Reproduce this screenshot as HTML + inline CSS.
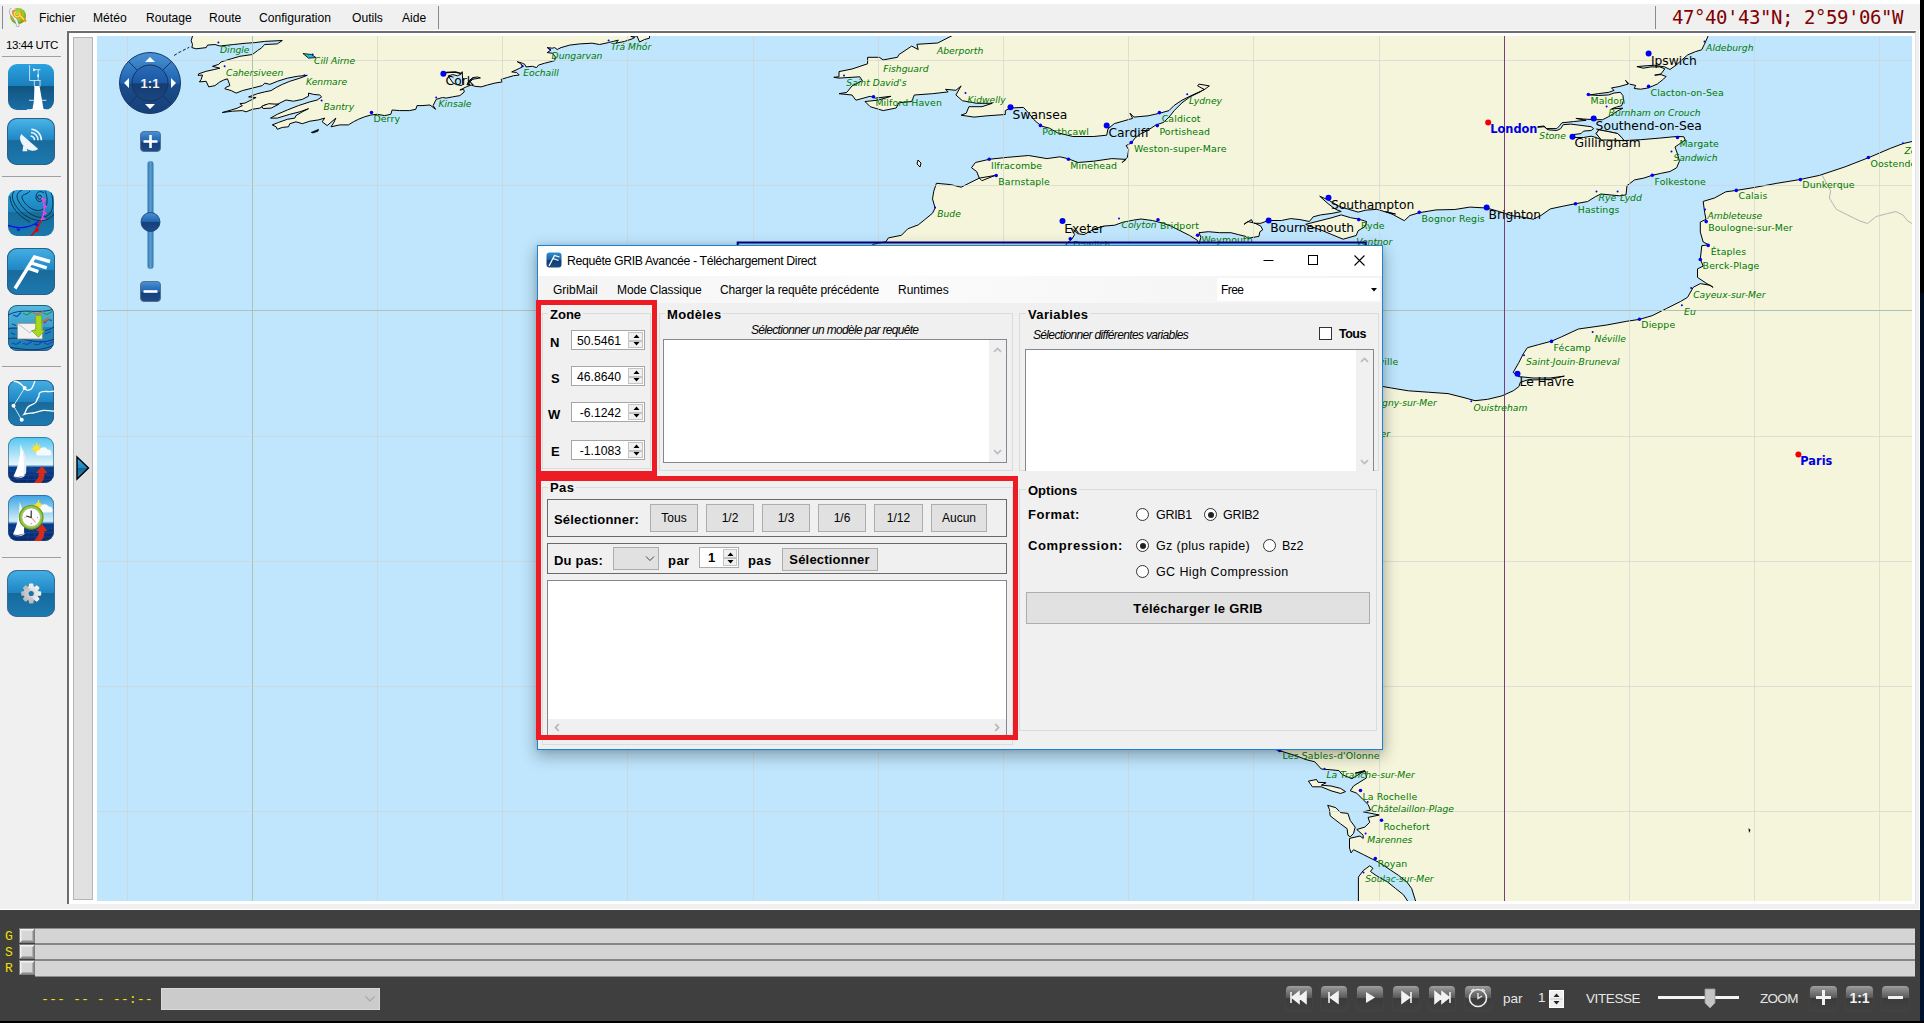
<!DOCTYPE html>
<html lang="fr"><head><meta charset="utf-8"><title>qtVlm - Requête GRIB Avancée</title>
<style>
*{box-sizing:border-box;margin:0;padding:0}
html,body{width:1924px;height:1023px;overflow:hidden;background:#fff}
body{position:relative;font-family:"Liberation Sans",sans-serif;font-size:12px;color:#000}
.abs{position:absolute}
#topbar{position:absolute;left:0;top:4px;width:1920px;height:26px;background:#f0f0f0}
#topbar .mi{position:absolute;top:7px;font-size:12.1px;line-height:14px;white-space:nowrap}
#coords{position:absolute;left:1672px;top:6px;font-family:"DejaVu Sans Mono","Liberation Mono",monospace;font-size:19px;letter-spacing:-0.44px;line-height:22px;color:#800000;white-space:pre}
#leftbar{position:absolute;left:0;top:30px;width:67px;height:879px;background:#f0f0f0}
.tb{position:absolute;left:8px;width:46px;height:46px;border-radius:9px;background:linear-gradient(#2b9fd9 0%,#1c7fba 49%,#15689a 50%,#1b78ad 100%);box-shadow:0 0 0 1px #14598a inset;overflow:hidden}
.sep{position:absolute;left:2px;width:59px;height:1px;background:#a0a0a0}
#bottom{position:absolute;left:0;top:909px;width:1920px;height:112px;background:#3f3f3f}
#black-r{position:absolute;left:1920px;top:0;width:4px;height:1023px;background:linear-gradient(#000 0,#000 293px,#000c20 293px,#00122e 1021px,#000 1021px)}
#black-b{position:absolute;left:0;top:1021px;width:1924px;height:2px;background:#000}
</style></head>
<body>
<div id="topbar">
  <div class="abs" style="left:2px;top:2px;width:1px;height:23px;background:#8a8a8a"></div>
  <svg class="abs" style="left:8px;top:4px" width="20" height="20" viewBox="8 8 20 20"><defs><radialGradient id="gl" cx="0.45" cy="0.4" r="0.6"><stop offset="0" stop-color="#b4e848"/><stop offset="0.7" stop-color="#8cc820"/><stop offset="1" stop-color="#5e9c10"/></radialGradient></defs><circle cx="18" cy="16" r="8" fill="url(#gl)"/><path d="M14.800 9.300C11 8 9.500 11.500 12 14.500S16.500 19 17.800 25.400" stroke="#9a9aae" stroke-width="3.200" fill="none" stroke-linecap="round"/><path d="M14.800 9.300C11 8 9.500 11.500 12 14.500S16.500 19 17.800 25.400" stroke="#f2f2f8" stroke-width="2" fill="none" stroke-linecap="round"/><path d="M15.800 10.300a3.400 3.400 0 1 0 4.300 1.300" stroke="#f0901a" stroke-width="3" fill="none"/><path d="M19.500 15.500l5.500 5" stroke="#f0901a" stroke-width="2.800" stroke-linecap="round"/><path d="M16 11.500a2.800 2.800 0 1 0 3.500 1M19.500 15.300l4.500 4.200" stroke="#ffe468" stroke-width="1.200" fill="none"/></svg>
  <span class="mi" style="left:39px">Fichier</span>
  <span class="mi" style="left:93px">Météo</span>
  <span class="mi" style="left:146px">Routage</span>
  <span class="mi" style="left:209px">Route</span>
  <span class="mi" style="left:259px">Configuration</span>
  <span class="mi" style="left:352px">Outils</span>
  <span class="mi" style="left:402px">Aide</span>
  <div class="abs" style="left:438px;top:2px;width:1px;height:23px;background:#8a8a8a"></div>
  <div class="abs" style="left:1655px;top:2px;width:1px;height:23px;background:#8a8a8a"></div>
</div>
<div id="coords">47°40'43"N; 2°59'06"W</div>

<div id="leftbar">
  <div class="abs" style="left:6px;top:8px;width:60px;font-size:11.6px;line-height:14px;white-space:nowrap;letter-spacing:-0.45px">13:44 UTC</div>
  <div class="sep" style="top:26px"></div>
  <!-- 1: station -->
  <div class="tb" style="top:34px;box-shadow:none;background:linear-gradient(#2ba2e0 0%,#1b7fbe 47%,#115480 48%,#1a6ea6 100%)"><svg width="46" height="46" viewBox="0 0 46 46"><path d="M21.600 1v15.500h11M30.200 5.700v10.500M25.300 5.700h7.200M26.400 16.500v6.200M32 16.500v6.200" stroke="#e8f4fb" stroke-width="0.800" fill="none"/><path d="M25.300 4l2.700 1.700-2.700 1.700z" fill="#fff"/><path d="M30.200 10.500v2.500" stroke="#fff" stroke-width="1.600"/><path d="M26.400 22h5.100l2.500 14.300 1.500 8.700 3 1h-17l3-1 1.500-8.700z" fill="#fff"/><path d="M21 36.300h17.400M19 45.600h21.600" stroke="#fff" stroke-width="0.800"/></svg></div>
  <!-- 2: dish -->
  <div class="tb" style="top:88px;left:7px;width:48px;height:47px;border-radius:10px;background:linear-gradient(#4db6e8 0%,#1e86c4 47%,#1a6a9a 48%,#1c7ab2 100%);box-shadow:0 0 0 1px #2a5f88 inset"><svg width="48" height="47" viewBox="0 0 48 47"><path d="M14.200 16.100L31.200 30.900A11.300 8.200 41 0 1 14.200 16.100z" fill="#eef5fa"/><path d="M16.300 27.500l3.300 2.300 0.900 3.400h-5z" fill="#eef5fa"/><path d="M23.600 18a4 4 0 0 1 3.900 4.200M24 14.500a7.400 7.400 0 0 1 7 7.800M24.300 11.200a10.800 10.800 0 0 1 10.100 11" stroke="#eef5fa" stroke-width="1.600" fill="none"/></svg></div>
  <div class="sep" style="top:146px"></div>
  <!-- 3: weather chart -->
  <div class="tb" style="top:160px;box-shadow:none;background:linear-gradient(#2ba0dc 0%,#1c82bc 47%,#166e9c 48%,#1a78ac 100%)"><svg width="46" height="46" viewBox="0 0 46 46"><g fill="none" stroke="#0a3348" stroke-width="1"><circle cx="31.500" cy="7.200" r="2"/><path d="M36 3c-4-3-8-1-8 4s5 6 7 2"/><path d="M22 1c-3 4-9 3-8 7 4 10 18 18 24 8 2-4 1-11-1-15"/><path d="M14 0c-6 3-6 7-3 12 7 12 24 22 32 10 3-6 2-14 0-20"/><path d="M6 1c-4 6 0 13 5 19 9 10 26 16 35 4"/><path d="M2 6c0 10 8 20 20 26"/></g><path d="M0 35.500c9 3.500 22 3 30.500-4" stroke="#0a14e8" stroke-width="1.400" fill="none"/><path d="M8 38.500l2.500 3 2-2.800zM26 34.500l3.500 2.500 0.500-3.500z" fill="#0a14e8"/><path d="M33.500 7.500c4 6 3.500 16-0.500 23" stroke="#f040f0" stroke-width="1.500" fill="none"/><path d="M35 8l3.500 1.500-2.500 2.500zM36.500 14.500l3 2-3 2zM36.500 21l3 2.500-3.500 1.500zM35 27l3 2.500-4 0.500z" fill="#f040f0"/><path d="M23 46c4-4 7.500-9 10-15.500" stroke="#e80000" stroke-width="1.500" fill="none"/><circle cx="28.800" cy="40" r="2" fill="#e80000"/></svg></div>
  <!-- 4: wind barb -->
  <div class="tb" style="top:218px;left:7px;width:48px;height:47px;border-radius:10px;background:linear-gradient(#45b0e4 0%,#1e86c4 47%,#1a6a9a 48%,#1c7ab2 100%);box-shadow:0 0 0 1px #2a5f88 inset"><svg width="48" height="47" viewBox="0 0 48 47"><path d="M8 40.500L27.500 9l15.500 4.500M24.200 15l15.500 4.800M21.200 20.200l10.200 3.500" stroke="#fff" stroke-width="3.400" fill="none"/></svg></div>
  <!-- 5: mail grib -->
  <div class="tb" style="top:275px;background:linear-gradient(#56bcdc 0%,#3aa0c4 47%,#2288b4 48%,#1f7eac 100%);box-shadow:0 0 0 1px #2a5f88 inset"><svg width="46" height="46" viewBox="0 0 46 46"><g fill="none" stroke="#0c2c78" stroke-width="0.900"><path d="M0 10c14-8 30 0 46-6M0 24c14-4 30 8 46-2M0 34c12-4 30 8 46 0M0 42c14 2 30 6 46-2"/></g><g fill="none" stroke-width="1.100"><path d="M5 10l4 1.500 4-4" stroke="#1040e0"/><path d="M15 8.500l4 1.500 5-3.500" stroke="#2a9030"/><path d="M25 7.500l4 2 6-3" stroke="#e06020"/><path d="M35 8l4 1.500 5-3" stroke="#2a9030"/><path d="M4 19l4 1.500M36 18l4-3.500 4 1" stroke="#1040e0"/><path d="M35 17l6-3.500" stroke="#e06020" stroke-width="2"/><path d="M3 28l4 1.500M37 29l6-2.500" stroke="#1040e0"/><path d="M4 38l4 1.500 5-3M15 38.500l4 1 5-3M26 39l4 1 5-4M36 38l4 1.500 5-3" stroke="#1040e0"/></g><rect x="9.400" y="18.300" width="25" height="15.700" fill="#f2f2f2" stroke="#8e8e8e" stroke-width="0.800"/><path d="M9.400 18.300l12.500 9.500 12.500-9.500" fill="none" stroke="#b0b0b0" stroke-width="0.800"/><path d="M27.700 10.500h6v15h3l-6.300 6.800-6.800-6.800h4.100z" fill="#a8d820" stroke="#78a810" stroke-width="0.800"/></svg></div>
  <div class="sep" style="top:336px"></div>
  <!-- 6: route -->
  <div class="tb" style="top:350px;box-shadow:0 0 0 1px #2a5f88 inset;background:linear-gradient(#45b0e4 0%,#1e86c4 47%,#1a6a9a 48%,#1c7ab2 100%)"><svg width="46" height="46" viewBox="0 0 46 46"><path d="M16.600 8.100L5.500 25.800l8.200 14" stroke="#fff" stroke-width="0.800" fill="none"/><circle cx="16.600" cy="8.100" r="2" fill="#fff"/><circle cx="5.500" cy="25.800" r="2" fill="#fff"/><circle cx="13.700" cy="39.800" r="2" fill="#fff"/><path d="M5.500 1c4 0 8 3 11 7s4 2 6 1.400 3-5 4.500-8.400M46.700 11c-5 1.500-10-0.500-13.700 1s-1 3.500-2.600 5.300-1.500 3.500-2.700 5.200-6 2.500-7.800 4.500-2 5-3.900 7.300c3-1 6-1 9-1.300s7-2.500 10.600-2.600 7 1 11.100 0.600" stroke="#fff" stroke-width="1.300" fill="none"/></svg></div>
  <!-- 7: sail -->
  <div class="tb" style="top:407px;box-shadow:0 0 0 1px rgba(40,80,120,.6) inset;background:linear-gradient(#52c6f0 0%,#e4f5fb 60%,#6fa8d8 63%,#0c3f8e 66%,#08286a 100%)"><svg width="46" height="46" viewBox="0 0 46 46"><g stroke="#2a58a8" stroke-width="0.500" opacity="0.700"><path d="M0 34h46M0 38h46M0 42.500h46M23 30l-14 16M23 30l-4 16M23 30l6 16M23 30l16 16M23 30l26 12"/></g><path d="M12.400 7c0.500 11-2 23-7 32.500 4 0.800 8 0.500 11-1 0.500-11 0-22-4-31.500z" fill="#fff"/><path d="M14.500 11c3.500 8 4.500 17 3.500 25.500l-2.500 1.500c0.500-9 0.500-18-1-27z" fill="#e6edf4"/><path d="M5 40c4 1.500 9 0.500 13-2.500-3 4-9 5-13 2.500z" fill="#dfe8f0"/><g stroke="#ffe22a" stroke-width="1.200"><path d="M28.600 6v11M23.500 11.400h10M25 7.800l7 7M32 7.800l-7 7"/></g><circle cx="28.600" cy="11.400" r="3" fill="#ffe22a"/><path d="M29 18.500a3.300 3.300 0 0 1 2.500-5.500 4.500 4.500 0 0 1 8-0.500 3.500 3.500 0 0 1 3 6z" fill="#f6fafc"/><path d="M25.500 46c3-3 5.500-5 5.500-10h-3l6-7 5.500 7h-3c0 5-1.500 8-3.500 10z" fill="#d42c1c"/></svg></div>
  <!-- 8: sail clock -->
  <div class="tb" style="top:465px;box-shadow:0 0 0 1px rgba(40,80,120,.6) inset;background:linear-gradient(#3aa4e4 0%,#d4eef8 57%,#6fa8d8 60%,#0c3f8e 63%,#08286a 100%)"><svg width="46" height="46" viewBox="0 0 46 46"><g stroke="#2a58a8" stroke-width="0.500" opacity="0.700"><path d="M0 33h46M0 37.500h46M0 42h46M23 29l-14 17M23 29l-4 17M23 29l6 17M23 29l16 17"/></g><path d="M11.500 7c0.500 11-2 23-6.500 32.500 4 0.800 8 0.500 11-1 0.500-11 0-22-4.500-31.500z" fill="#fff"/><path d="M5 40c4 1.500 9 0.500 13-2.500-3 4-9 5-13 2.500z" fill="#dfe8f0"/><g stroke="#ffe22a" stroke-width="1.200"><path d="M30.500 5v9M26 10h9"/></g><circle cx="30.500" cy="10.500" r="3" fill="#ffe22a"/><path d="M30 17.500a3.300 3.300 0 0 1 2.500-5.500 4.500 4.500 0 0 1 8-0.500 3.500 3.500 0 0 1 3 6z" fill="#f6fafc"/><path d="M25.500 46c3-3 5.500-5 5.500-10h-3l6-7 5.500 7h-3c0 5-1.500 8-3.500 10z" fill="#d42c1c"/><circle cx="23.200" cy="22.300" r="11.800" fill="#94c83c" stroke="#6a9a20" stroke-width="1.200"/><circle cx="23.200" cy="22.300" r="9.300" fill="#fdfdfd" stroke="#a8b890" stroke-width="0.800"/><path d="M23.200 15.500v7l-5-1.500" stroke="#222" stroke-width="1.100" fill="none"/><path d="M23.200 22.500l4.500 5" stroke="#e04040" stroke-width="0.700"/><g fill="#888"><circle cx="29.500" cy="22.300" r="0.600"/><circle cx="23.200" cy="28.700" r="0.600"/><circle cx="17" cy="22.300" r="0.600"/></g></svg></div>
  <div class="sep" style="top:527px"></div>
  <!-- 9: gear -->
  <div class="tb" style="top:540px;left:7px;width:48px;height:47px;border-radius:10px;background:linear-gradient(#45b0e4 0%,#1e86c4 48%,#166a9c 49%,#1c7ab2 100%);box-shadow:0 0 0 1px #3a6a90 inset"><svg width="48" height="47" viewBox="0 0 48 47"><defs><linearGradient id="gg" x1="0" y1="0" x2="0" y2="1"><stop offset="0" stop-color="#f4f4f4"/><stop offset="1" stop-color="#b8b8b8"/></linearGradient></defs><g transform="translate(24.200,23.500)" fill="url(#gg)"><circle r="7.600"/><rect x="-2.300" y="-10" width="4.600" height="20" rx="1.200"/><rect x="-2.300" y="-10" width="4.600" height="20" rx="1.200" transform="rotate(45)"/><rect x="-2.300" y="-10" width="4.600" height="20" rx="1.200" transform="rotate(90)"/><rect x="-2.300" y="-10" width="4.600" height="20" rx="1.200" transform="rotate(135)"/><circle r="2.600" fill="#1a74ae"/></g></svg></div>
</div>

<!-- map frame -->
<div class="abs" style="left:67px;top:31px;width:1849px;height:874px;background:#fff;border-left:2px solid #6d6d6d;border-top:2px solid #6d6d6d;border-right:1px solid #e3e3e3;border-bottom:1px solid #e3e3e3"></div>
<div class="abs" style="left:1916px;top:30px;width:3px;height:879px;background:#f0f0f0"></div>
<div class="abs" style="left:0;top:904px;width:1919px;height:5px;background:#f0f0f0"></div>
<div class="abs" style="left:73px;top:37px;width:20px;height:863px;background:#e1e1e1;border:1px solid #b5b5b5"></div>
<svg class="abs" style="left:74px;top:453px" width="18" height="30" viewBox="0 0 18 30"><defs><linearGradient id="ag" x1="0" y1="0" x2="0" y2="1"><stop offset="0" stop-color="#35a8e0"/><stop offset="0.5" stop-color="#1f86c0"/><stop offset="0.52" stop-color="#15689a"/><stop offset="1" stop-color="#2090c8"/></linearGradient></defs><path d="M3 4L14.500 15 3 26z" fill="url(#ag)" stroke="#000" stroke-width="1.4" stroke-linejoin="miter"/></svg>
<svg id="map" width="1815" height="865" viewBox="97 36 1815 865" style="position:absolute;left:97px;top:36px">
<rect x="97" y="36" width="1815" height="865" fill="#bfe6fd"/>
<polygon fill="#f5f5dc" stroke="#000" stroke-width="1" stroke-linejoin="round" points="192.5,30 192.5,36.0 191.2,40.7 192.5,44.5 191.9,47.6 196.2,48.8 206.2,47.6 207.5,45.1 214.9,44.5 219.9,46.0 233.7,44.5 246.1,43.2 254.9,42.6 264.8,41.4 282.3,40.5 277.3,43.9 264.8,44.5 261.1,48.2 257.4,50.7 254.9,52.6 252.4,54.5 239.9,56.3 231.2,58.8 221.2,61.9 218.7,64.4 212.5,66.3 219.9,68.2 214.9,69.4 206.2,71.3 198.7,73.8 198.1,75.4 202.5,75.0 201.2,79.4 199.4,81.9 206.2,81.3 208.7,86.9 214.9,85.6 219.9,81.9 223.7,80.0 227.4,78.8 228.7,81.9 229.9,85.6 225.6,87.5 224.9,88.8 231.2,90.6 236.2,93.1 242.4,90.6 252.4,88.1 262.3,85.6 264.8,83.1 269.8,84.4 277.3,81.3 287.3,78.2 297.3,76.3 307.3,75.3 299.8,78.2 289.8,81.3 282.3,84.4 276.1,87.5 271.1,90.6 264.8,91.9 257.4,93.7 252.4,95.6 248.6,96.9 256.1,97.5 249.9,100.6 244.9,103.1 239.9,103.7 242.4,105.6 237.4,108.1 231.2,110.0 222.4,112.5 232.4,111.2 242.4,110.6 246.1,111.8 252.4,109.3 259.9,108.1 264.8,105.0 277.3,104.3 286.0,100.0 293.5,101.2 302.3,99.4 308.5,96.2 308.5,93.1 313.5,94.4 319.7,95.0 321.6,96.9 317.2,100.0 309.8,101.9 298.5,105.6 287.3,110.0 277.3,114.3 270.5,118.1 277.3,118.1 289.8,114.3 299.8,111.8 308.5,108.7 302.3,111.8 296.0,115.6 294.8,118.1 287.3,119.3 278.6,122.4 272.3,124.9 276.1,126.8 277.3,129.3 282.3,127.4 288.5,126.8 289.8,123.7 296.0,121.8 302.3,123.7 309.8,121.2 318.5,119.9 324.7,118.1 322.2,121.8 327.2,125.6 335.9,118.1 333.5,123.1 331.0,126.8 339.7,124.9 348.4,124.9 353.4,121.8 358.4,119.3 364.6,116.8 370.9,115.0 377.1,114.3 384.6,115.6 390.8,114.3 392.1,110.0 399.6,110.6 409.5,110.6 415.8,109.3 417.0,105.6 422.0,105.6 430.0,105.0 435.6,109.3 433.1,105.6 436.2,99.4 442.5,97.5 446.2,98.1 452.4,96.9 459.9,95.6 464.3,91.9 463.7,89.4 459.9,90.0 466.2,86.9 471.1,85.0 474.9,86.3 481.1,86.9 487.4,85.0 494.8,83.1 502.3,81.9 501.1,79.4 507.3,77.5 513.6,75.7 519.2,75.0 516.7,72.5 511.7,71.9 516.0,70.0 519.8,68.2 523.5,66.3 519.8,63.2 517.3,61.7 522.3,63.2 524.8,64.4 526.0,66.9 532.3,66.3 536.6,67.6 538.5,65.1 544.7,63.2 552.2,61.3 554.7,60.7 555.3,56.9 552.2,53.2 547.2,52.6 551.0,50.1 547.2,47.6 552.2,48.2 554.7,47.6 557.2,49.5 561.0,47.6 569.7,45.1 579.7,43.9 592.1,43.2 599.6,44.5 608.4,42.6 613.3,41.4 618.3,40.1 615.8,43.2 624.6,41.4 632.1,38.9 634.6,37.6 630.8,36.4 637.0,36.0 639.5,42.0 644.5,39.5 649.5,38.2 649.5,36.0 649.5,30"/>
<polygon fill="#f5f5dc" stroke="#000" stroke-width="1" stroke-linejoin="round" points="952.0,30 952.0,35.7 937.7,43.0 916.9,44.3 918.2,49.5 911.7,46.1 898.8,54.7 897.5,57.3 883.2,59.9 879.3,57.3 867.6,57.3 867.6,63.8 852.0,69.0 839.0,71.6 839.0,76.8 833.8,77.3 839.0,78.1 859.8,76.8 862.4,80.7 852.0,85.9 846.8,92.4 839.0,93.7 852.0,95.0 855.9,100.2 870.2,96.3 875.4,98.1 891.0,96.3 878.0,100.2 865.0,101.5 870.2,106.7 883.2,110.6 896.2,108.0 898.8,102.8 911.7,101.5 914.3,95.0 932.5,93.7 948.1,91.9 945.5,89.3 955.9,90.3 961.1,85.9 955.9,95.0 962.4,100.7 976.7,103.3 992.3,103.3 981.9,106.7 968.9,106.7 966.3,113.2 961.1,115.2 974.1,117.1 987.1,115.8 1005.3,114.5 1005.3,110.6 1010.5,108.0 1023.5,107.4 1028.7,113.2 1035.2,121.0 1041.7,126.2 1049.5,128.2 1057.3,132.7 1072.9,136.5 1093.7,136.5 1106.7,135.2 1108.0,128.8 1114.4,123.6 1132.6,118.4 1130.0,113.2 1133.9,117.1 1148.2,115.8 1159.9,113.2 1169.0,110.6 1174.2,105.4 1182.0,100.2 1192.4,95.0 1204.1,89.8 1209.3,85.9 1198.9,84.1 1197.6,85.9 1204.1,89.3 1200.2,91.9 1189.8,97.0 1182.0,102.8 1174.2,110.6 1169.0,117.1 1163.8,122.3 1156.0,124.9 1148.2,130.1 1140.4,134.0 1135.2,137.8 1131.3,143.0 1126.1,145.6 1128.7,149.5 1127.4,157.3 1122.2,162.5 1126.1,159.4 1111.9,158.6 1093.7,161.2 1078.1,162.5 1067.7,158.6 1059.9,156.8 1046.9,158.6 1028.7,155.5 1007.9,157.3 989.7,159.2 975.4,162.5 971.5,167.7 976.7,171.6 979.3,178.1 981.9,180.7 994.9,175.5 979.3,178.1 968.9,183.3 961.1,187.2 950.7,184.6 936.4,183.3 933.8,191.1 932.5,198.9 935.1,208.0 932.5,213.2 924.7,219.7 918.2,224.9 907.8,228.8 901.4,235.3 888.4,237.9 885.8,241.8 872.8,244.4 860,260 900,300 1060,300 1066.2,243.9 1071.8,239.2 1074.6,234.6 1070.9,228.0 1073.7,229.9 1077.4,233.6 1084.0,234.6 1094.3,228.9 1103.6,226.1 1114.8,225.2 1122.3,222.4 1133.6,220.1 1141.0,219.0 1152.3,220.5 1163.5,223.3 1171.0,226.1 1180.3,230.8 1189.7,235.5 1197.2,240.2 1199.0,243.9 1200.9,237.4 1199.0,232.7 1208.4,231.7 1219.6,232.7 1230.9,232.7 1238.3,234.6 1245.8,236.4 1247.7,238.3 1258.9,236.4 1259.9,231.7 1262.7,229.9 1260.8,226.1 1255.2,223.3 1247.7,221.5 1244.0,224.3 1251.4,219.6 1253.3,223.3 1260.8,223.3 1268.3,220.5 1281.4,220.5 1290.7,218.6 1300.1,219.6 1309.4,221.5 1313.2,216.8 1320.7,214.9 1331.9,213.4 1341.2,211.5 1335.6,209.3 1328.1,203.7 1319.7,196.2 1328.1,199.9 1339.4,206.5 1348.7,209.3 1358.1,212.1 1365.6,210.2 1376.8,209.3 1386.2,212.1 1395.5,214.0 1385.6,211.7 1393.1,214.6 1404.3,220.7 1409.9,215.5 1419.3,212.7 1436.1,209.9 1454.8,209.5 1469.8,207.1 1486.7,208.0 1499.8,211.7 1511.0,215.5 1524.1,217.4 1533.4,219.2 1540.9,215.5 1550.3,208.9 1563.4,206.1 1574.6,203.9 1587.7,201.5 1595.2,196.8 1600.8,194.0 1610.1,194.9 1619.5,195.8 1626.0,194.9 1627.0,185.6 1634.5,179.9 1643.8,178.1 1652.2,175.3 1660.7,173.4 1670.0,171.5 1676.6,167.8 1679.4,161.2 1678.8,159.1 1677.5,154.0 1675.0,147.0 1678.8,144.4 1685.2,140.0 1683.9,136.8 1677.5,136.4 1659.8,138.1 1640.7,139.7 1624.2,140.6 1621.6,137.5 1617.8,133.6 1608.9,131.7 1598.8,129.8 1596.2,133.6 1601.3,140.0 1596.2,137.5 1591.1,136.2 1583.5,137.5 1573.4,137.5 1570.8,134.9 1581.0,133.6 1583.5,131.1 1591.1,130.5 1593.7,128.6 1591.1,126.7 1581.0,125.4 1570.8,124.1 1563.2,124.7 1560.7,128.6 1556.8,130.5 1548.0,129.8 1544.1,126.7 1537.8,127.3 1537.8,126.7 1544.1,126.0 1546.7,128.6 1556.8,128.6 1559.4,126.0 1561.9,122.8 1573.4,121.6 1586.1,120.3 1575.9,118.4 1583.5,119.0 1593.7,119.7 1602.6,119.7 1608.9,116.5 1614.0,113.3 1617.8,110.8 1622.9,108.2 1611.5,108.9 1616.6,107.0 1621.6,105.7 1623.5,100.6 1622.9,95.5 1620.4,92.3 1614.0,93.0 1608.9,94.9 1598.8,95.5 1589.9,94.9 1598.8,93.6 1608.9,92.3 1614.0,90.4 1611.5,87.9 1619.1,86.6 1628.0,84.1 1625.5,80.3 1629.3,84.1 1635.6,85.4 1634.3,88.5 1640.7,89.2 1648.3,87.9 1657.2,84.1 1663.6,79.0 1666.1,76.5 1661.0,74.6 1654.7,75.2 1661.0,73.9 1664.8,68.8 1659.8,66.9 1650.9,66.9 1643.2,68.2 1636.9,66.6 1647.1,65.7 1654.7,65.3 1664.8,66.9 1669.9,69.5 1676.3,65.0 1682.6,59.3 1687.7,54.9 1695.3,51.7 1701.7,49.8 1704.2,44.7 1706.8,39.0 1708.0,36.1 1708.0,30"/>
<polygon fill="#f5f5dc" stroke="#000" stroke-width="1" stroke-linejoin="round" points="1305.7,224.3 1316.9,221.5 1331.9,217.7 1341.2,214.9 1350.6,217.7 1358.1,219.0 1366.5,221.5 1365.6,226.1 1358.1,230.8 1356.2,235.5 1343.1,239.2 1331.9,234.6 1320.7,229.9 1309.4,226.1"/>
<polygon fill="#f5f5dc" stroke="#000" stroke-width="1" stroke-linejoin="round" points="918,160 921,163 920,167 917,164"/>
<polygon fill="#f5f5dc" stroke="#000" stroke-width="1" stroke-linejoin="round" points="1912.9,141.3 1903.0,143.6 1890.3,148.4 1869.0,157.5 1844.9,166.9 1819.4,175.4 1799.6,179.6 1776.9,183.3 1754.2,187.5 1736.6,190.4 1725.8,191.8 1714.5,198.0 1703.2,201.4 1704.6,212.2 1706.0,219.3 1700.3,222.1 1700.3,232.1 1703.2,242.0 1708.8,244.8 1701.8,245.7 1700.3,259.0 1703.2,266.1 1697.5,268.9 1697.5,277.4 1706.0,283.1 1713.1,287.3 1710.3,285.3 1700.3,283.6 1693.2,287.3 1687.6,297.3 1680.5,301.5 1666.3,308.6 1652.1,315.7 1639.4,319.4 1626.6,321.3 1606.8,325.0 1578.4,329.0 1561.4,336.9 1551.5,341.2 1538.7,344.6 1527.4,347.7 1523.2,353.9 1518.9,362.5 1513.2,372.4 1518.9,376.6 1533.1,378.0 1550.1,378.0 1564.3,376.1 1550.1,379.5 1527.4,380.0 1520.3,382.3 1518.9,386.6 1513.2,390.8 1501.9,395.9 1487.7,399.3 1475.0,400.7 1465.0,397.9 1448.0,393.6 1428.2,392.2 1408.3,390.8 1391.3,388.0 1380.0,386.0 1300,420 1200,600 1250,745 1276.1,749.7 1284.2,752.1 1297.1,756.1 1305.2,759.4 1314.8,761.8 1321.3,769.0 1331.0,769.8 1339.0,770.6 1342.3,774.7 1351.9,778.7 1364.8,770.6 1355.2,773.1 1365.6,771.5 1366.5,777.9 1360.0,781.9 1353.5,786.0 1350.3,790.8 1356.8,793.2 1363.2,799.7 1368.1,804.5 1370.5,810.2 1363.2,811.8 1379.4,815.0 1368.1,817.4 1369.7,822.3 1364.8,827.1 1356.8,829.5 1363.2,835.2 1363.2,838.4 1360.0,836.0 1349.5,838.4 1349.5,848.1 1351.1,852.9 1353.5,849.7 1363.2,854.5 1372.9,859.4 1379.4,862.6 1389.0,869.0 1398.7,875.5 1406.8,881.9 1411.6,888.4 1415.6,901.0 1415.6,910 1920,910 1920,138.3"/>
<polygon fill="#f5f5dc" stroke="#000" stroke-width="1" stroke-linejoin="round" points="1358.4,910 1358.4,901.0 1358.4,877.1 1363.2,870.6 1369.7,865.8 1372.9,868.2 1370.5,871.5 1376.1,875.5 1387.4,881.9 1395.5,888.4 1403.5,894.8 1407.6,901.0 1407.6,910"/>
<polygon fill="#f5f5dc" stroke="#000" stroke-width="1" stroke-linejoin="round" points="1598.8,129.8 1608.9,131.7 1617.8,133.6 1621.6,137.5 1624.2,140.6 1608.9,140.0 1601.3,140.0 1596.2,133.6"/>
<polygon fill="#f5f5dc" stroke="#000" stroke-width="1" stroke-linejoin="round" points="261.8,106.2 268.7,103.7 278.7,104.3 271.2,108.1 263.1,108.5"/>
<polygon fill="#000" stroke="#000" stroke-width="0.6" points="311.1,132.4 318.6,129.3 318.0,131.2 313.0,133.0"/>
<polyline fill="none" stroke="#000" stroke-width="0.9" stroke-dasharray="3 2" points="174.2,55.4 180.6,51.6 189.2,47.3"/>
<polygon fill="#f5f5dc" stroke="#000" stroke-width="1" stroke-linejoin="round" points="1308.4,781.1 1316.5,779.5 1318.1,782.3 1326.1,782.7 1321.3,785.2 1331.0,786.0 1340.6,788.4 1345.5,791.6 1340.6,793.5 1331.0,790.8 1321.3,786.8 1312.4,786.8"/>
<polygon fill="#f5f5dc" stroke="#000" stroke-width="1" stroke-linejoin="round" points="1327.7,805.3 1335.8,807.7 1340.6,812.6 1347.9,813.4 1350.3,820.6 1355.2,827.1 1353.5,833.5 1350.3,836.8 1347.9,835.2 1347.1,828.7 1340.6,823.9 1334.2,819.0 1330.2,815.8 1329.4,809.4"/>
<polygon fill="#bfe6fd" stroke="#000" stroke-width="1" points="448.2,75.8 452.8,74.6 457.5,75.8 461.1,74.0 462.2,71.7 462.5,75.8 462.8,84.6 461.1,85.5 456.4,84.6 452.8,82.8 449.3,77.6"/>
<polygon fill="#bfe6fd" stroke="#000" stroke-width="1" points="469.9,85.2 468.7,82.8 472.8,79.3 480.4,77.9 477.5,77.0 472.8,77.6 469.3,80.5 466.9,84.6"/>
<polyline fill="none" stroke="#000" stroke-width="1.5" points="443.5,73.5 446.4,72.6 455.2,72.0 461.1,73.5"/>
<polyline fill="none" stroke="#b4b4b4" stroke-width="1" points="1822.2,175.4 1830.7,190.9 1829.3,198.0 1836.4,209.4 1847.7,215.0 1859.1,220.7 1867.6,223.5 1876.1,216.5 1887.4,213.6 1895.9,211.6 1903.0,215.0 1907.3,220.7 1911.8,223.5"/>
<polygon fill="#20c0c0" stroke="#000" stroke-width="0.8" points="302.9,53.5 311.6,54.5 316,57.6 308.5,58.2"/>
<polygon fill="#000" points="1748.5,828 1750.5,830 1749,833"/>
<line x1="127.5" x2="127.5" y1="36" y2="901" stroke="#d1d1d1" stroke-width="1" stroke-opacity="0.62"/>
<line x1="252.5" x2="252.5" y1="36" y2="901" stroke="#acc3b4" stroke-width="1" stroke-opacity="1"/>
<line x1="377.5" x2="377.5" y1="36" y2="901" stroke="#d1d1d1" stroke-width="1" stroke-opacity="0.62"/>
<line x1="502.5" x2="502.5" y1="36" y2="901" stroke="#d1d1d1" stroke-width="1" stroke-opacity="0.62"/>
<line x1="627.5" x2="627.5" y1="36" y2="901" stroke="#d1d1d1" stroke-width="1" stroke-opacity="0.62"/>
<line x1="753.5" x2="753.5" y1="36" y2="901" stroke="#d1d1d1" stroke-width="1" stroke-opacity="0.62"/>
<line x1="878.5" x2="878.5" y1="36" y2="901" stroke="#d1d1d1" stroke-width="1" stroke-opacity="0.62"/>
<line x1="1003.5" x2="1003.5" y1="36" y2="901" stroke="#d1d1d1" stroke-width="1" stroke-opacity="0.62"/>
<line x1="1128.5" x2="1128.5" y1="36" y2="901" stroke="#d1d1d1" stroke-width="1" stroke-opacity="0.62"/>
<line x1="1253.5" x2="1253.5" y1="36" y2="901" stroke="#d1d1d1" stroke-width="1" stroke-opacity="0.62"/>
<line x1="1379.5" x2="1379.5" y1="36" y2="901" stroke="#d1d1d1" stroke-width="1" stroke-opacity="0.62"/>
<line x1="1629.5" x2="1629.5" y1="36" y2="901" stroke="#d1d1d1" stroke-width="1" stroke-opacity="0.62"/>
<line x1="1754.5" x2="1754.5" y1="36" y2="901" stroke="#d1d1d1" stroke-width="1" stroke-opacity="0.62"/>
<line x1="1879.5" x2="1879.5" y1="36" y2="901" stroke="#d1d1d1" stroke-width="1" stroke-opacity="0.62"/>
<line y1="60.5" y2="60.5" x1="97" x2="1912" stroke="#d1d1d1" stroke-width="1" stroke-opacity="0.62"/>
<line y1="185.5" y2="185.5" x1="97" x2="1912" stroke="#d1d1d1" stroke-width="1" stroke-opacity="0.62"/>
<line y1="310.5" y2="310.5" x1="97" x2="1912" stroke="#acc3b4" stroke-width="1" stroke-opacity="1"/>
<line y1="436.5" y2="436.5" x1="97" x2="1912" stroke="#d1d1d1" stroke-width="1" stroke-opacity="0.62"/>
<line y1="561.5" y2="561.5" x1="97" x2="1912" stroke="#d1d1d1" stroke-width="1" stroke-opacity="0.62"/>
<line y1="686.5" y2="686.5" x1="97" x2="1912" stroke="#d1d1d1" stroke-width="1" stroke-opacity="0.62"/>
<line y1="811.5" y2="811.5" x1="97" x2="1912" stroke="#d1d1d1" stroke-width="1" stroke-opacity="0.62"/>
<line x1="1504.5" x2="1504.5" y1="36" y2="901" stroke="#7a3f7a" stroke-width="1"/>
<circle cx="218.4" cy="42.6" r="1" fill="#0000f0"/>
<circle cx="312.6" cy="54.5" r="1" fill="#0000f0"/>
<circle cx="224.6" cy="66.3" r="1" fill="#0000f0"/>
<circle cx="304.5" cy="75.3" r="1" fill="#0000f0"/>
<circle cx="321.6" cy="100.6" r="1" fill="#0000f0"/>
<circle cx="371.5" cy="112.5" r="1.8" fill="#0000f0"/>
<circle cx="443.4" cy="73.8" r="3" fill="#0000f0"/>
<circle cx="436.2" cy="97.5" r="1" fill="#0000f0"/>
<circle cx="522" cy="66" r="1" fill="#0000f0"/>
<circle cx="549.7" cy="49.5" r="1" fill="#0000f0"/>
<circle cx="608.6" cy="40.5" r="1" fill="#0000f0"/>
<circle cx="844" cy="75.5" r="1" fill="#0000f0"/>
<circle cx="873.5" cy="96.8" r="1.8" fill="#0000f0"/>
<circle cx="965.5" cy="93" r="1" fill="#0000f0"/>
<circle cx="1010.5" cy="107.2" r="3" fill="#0000f0"/>
<circle cx="1040.4" cy="125.4" r="1.8" fill="#0000f0"/>
<circle cx="1106.7" cy="125.6" r="3" fill="#0000f0"/>
<circle cx="1187.2" cy="94.2" r="1" fill="#0000f0"/>
<circle cx="1159.4" cy="112.6" r="1.8" fill="#0000f0"/>
<circle cx="1157.3" cy="125.6" r="1.8" fill="#0000f0"/>
<circle cx="1131.3" cy="142.5" r="1.8" fill="#0000f0"/>
<circle cx="989.2" cy="159.2" r="1.8" fill="#0000f0"/>
<circle cx="1068.5" cy="159.2" r="1.8" fill="#0000f0"/>
<circle cx="996.2" cy="175.5" r="1.8" fill="#0000f0"/>
<circle cx="935.1" cy="207.5" r="1" fill="#0000f0"/>
<circle cx="1062.5" cy="221" r="3" fill="#0000f0"/>
<circle cx="1119" cy="218.4" r="1" fill="#0000f0"/>
<circle cx="1158" cy="219.7" r="1.8" fill="#0000f0"/>
<circle cx="1197.6" cy="235.3" r="1.8" fill="#0000f0"/>
<circle cx="1070.3" cy="238.7" r="1.8" fill="#0000f0"/>
<circle cx="1268.7" cy="220.5" r="3" fill="#0000f0"/>
<circle cx="1328.5" cy="197.7" r="3" fill="#0000f0"/>
<circle cx="1358.7" cy="219.6" r="1.8" fill="#0000f0"/>
<circle cx="1419.3" cy="212.3" r="1.8" fill="#0000f0"/>
<circle cx="1486.7" cy="207.4" r="3" fill="#0000f0"/>
<circle cx="1575.5" cy="203.7" r="1.8" fill="#0000f0"/>
<circle cx="1596.5" cy="191.5" r="1" fill="#0000f0"/>
<circle cx="1617.6" cy="191.5" r="1" fill="#0000f0"/>
<circle cx="1652.3" cy="175.3" r="1.8" fill="#0000f0"/>
<circle cx="1671.5" cy="151.5" r="1" fill="#0000f0"/>
<circle cx="1704.5" cy="41.5" r="1" fill="#0000f0"/>
<circle cx="1648.6" cy="53.6" r="3" fill="#0000f0"/>
<circle cx="1648.6" cy="86.4" r="1.8" fill="#0000f0"/>
<circle cx="1588.4" cy="94.5" r="1.8" fill="#0000f0"/>
<circle cx="1606.6" cy="106.6" r="1" fill="#0000f0"/>
<circle cx="1593.7" cy="118.4" r="3" fill="#0000f0"/>
<circle cx="1572.5" cy="136.8" r="3" fill="#0000f0"/>
<circle cx="1677.5" cy="137.5" r="1.8" fill="#0000f0"/>
<circle cx="1488.2" cy="122.4" r="3" fill="#f00000"/>
<circle cx="1868.4" cy="157.5" r="1.8" fill="#0000f0"/>
<circle cx="1903" cy="143.3" r="1" fill="#0000f0"/>
<circle cx="1800.4" cy="179.6" r="1.8" fill="#0000f0"/>
<circle cx="1736.3" cy="190.4" r="1.8" fill="#0000f0"/>
<circle cx="1705.1" cy="209.4" r="1" fill="#0000f0"/>
<circle cx="1706.2" cy="221.6" r="1.8" fill="#0000f0"/>
<circle cx="1708.2" cy="245.4" r="1.8" fill="#0000f0"/>
<circle cx="1700.3" cy="259.5" r="1.8" fill="#0000f0"/>
<circle cx="1691.2" cy="287.9" r="1" fill="#0000f0"/>
<circle cx="1681.9" cy="305.2" r="1" fill="#0000f0"/>
<circle cx="1639.4" cy="319.3" r="1.8" fill="#0000f0"/>
<circle cx="1592.6" cy="332.1" r="1" fill="#0000f0"/>
<circle cx="1551.5" cy="341.4" r="1.8" fill="#0000f0"/>
<circle cx="1524" cy="355.3" r="1" fill="#0000f0"/>
<circle cx="1517.5" cy="373.8" r="3" fill="#0000f0"/>
<circle cx="1471.3" cy="401.3" r="1" fill="#0000f0"/>
<circle cx="1279.7" cy="750.5" r="1.8" fill="#0000f0"/>
<circle cx="1324.5" cy="768.7" r="1" fill="#0000f0"/>
<circle cx="1360.5" cy="790.5" r="1.8" fill="#0000f0"/>
<circle cx="1367.7" cy="802.1" r="1" fill="#0000f0"/>
<circle cx="1381.5" cy="820.3" r="1.8" fill="#0000f0"/>
<circle cx="1365.6" cy="833.5" r="1" fill="#0000f0"/>
<circle cx="1375.3" cy="858.5" r="1.8" fill="#0000f0"/>
<circle cx="1363.5" cy="872.6" r="1" fill="#0000f0"/>
<circle cx="1798.4" cy="454.4" r="3" fill="#f00000"/>
<text x="220" y="52.6" font-family="DejaVu Sans, Liberation Sans, sans-serif" font-size="9.2" font-style="italic" fill="#007800">Dingle</text>
<text x="314" y="63.800000000000004" font-family="DejaVu Sans, Liberation Sans, sans-serif" font-size="9.2" font-style="italic" fill="#007800">Cill Airne</text>
<text x="226" y="76.3" font-family="DejaVu Sans, Liberation Sans, sans-serif" font-size="9.2" font-style="italic" fill="#007800">Cahersiveen</text>
<text x="306" y="85.0" font-family="DejaVu Sans, Liberation Sans, sans-serif" font-size="9.2" font-style="italic" fill="#007800">Kenmare</text>
<text x="323.5" y="109.89999999999999" font-family="DejaVu Sans, Liberation Sans, sans-serif" font-size="9.2" font-style="italic" fill="#007800">Bantry</text>
<text x="373.4" y="121.6" font-family="DejaVu Sans, Liberation Sans, sans-serif" font-size="9.4" fill="#007800" letter-spacing="0.12">Derry</text>
<text x="445.6" y="85.0" font-family="DejaVu Sans, Liberation Sans, sans-serif" font-size="12.3" fill="#000">Cork</text>
<text x="438.5" y="107.39999999999999" font-family="DejaVu Sans, Liberation Sans, sans-serif" font-size="9.2" font-style="italic" fill="#007800">Kinsale</text>
<text x="523.3" y="76.3" font-family="DejaVu Sans, Liberation Sans, sans-serif" font-size="9.2" font-style="italic" fill="#007800">Eochaill</text>
<text x="551.6" y="59.4" font-family="DejaVu Sans, Liberation Sans, sans-serif" font-size="9.2" font-style="italic" fill="#007800">Dungarvan</text>
<text x="610.8" y="50.1" font-family="DejaVu Sans, Liberation Sans, sans-serif" font-size="9.2" font-style="italic" fill="#007800">Trá Mhór</text>
<text x="937" y="53.5" font-family="DejaVu Sans, Liberation Sans, sans-serif" font-size="9.2" font-style="italic" fill="#007800">Aberporth</text>
<text x="883.2" y="71.6" font-family="DejaVu Sans, Liberation Sans, sans-serif" font-size="9.2" font-style="italic" fill="#007800">Fishguard</text>
<text x="846.3" y="85.6" font-family="DejaVu Sans, Liberation Sans, sans-serif" font-size="9.2" font-style="italic" fill="#007800">Saint David&#39;s</text>
<text x="875.4" y="105.9" font-family="DejaVu Sans, Liberation Sans, sans-serif" font-size="9.4" fill="#007800" letter-spacing="0.12">Milford Haven</text>
<text x="967.6" y="102.8" font-family="DejaVu Sans, Liberation Sans, sans-serif" font-size="9.2" font-style="italic" fill="#007800">Kidwelly</text>
<text x="1012.6" y="119.30000000000001" font-family="DejaVu Sans, Liberation Sans, sans-serif" font-size="12.3" fill="#000">Swansea</text>
<text x="1042.2" y="134.7" font-family="DejaVu Sans, Liberation Sans, sans-serif" font-size="9.4" fill="#007800" letter-spacing="0.12">Porthcawl</text>
<text x="1108.5" y="136.9" font-family="DejaVu Sans, Liberation Sans, sans-serif" font-size="12.3" fill="#000">Cardiff</text>
<text x="1189" y="104.1" font-family="DejaVu Sans, Liberation Sans, sans-serif" font-size="9.2" font-style="italic" fill="#007800">Lydney</text>
<text x="1161.7" y="121.7" font-family="DejaVu Sans, Liberation Sans, sans-serif" font-size="9.4" fill="#007800" letter-spacing="0.12">Caldicot</text>
<text x="1159.4" y="134.7" font-family="DejaVu Sans, Liberation Sans, sans-serif" font-size="9.4" fill="#007800" letter-spacing="0.12">Portishead</text>
<text x="1134" y="152.1" font-family="DejaVu Sans, Liberation Sans, sans-serif" font-size="9.4" fill="#007800" letter-spacing="0.12">Weston-super-Mare</text>
<text x="991" y="168.5" font-family="DejaVu Sans, Liberation Sans, sans-serif" font-size="9.4" fill="#007800" letter-spacing="0.12">Ilfracombe</text>
<text x="1070.3" y="168.5" font-family="DejaVu Sans, Liberation Sans, sans-serif" font-size="9.4" fill="#007800" letter-spacing="0.12">Minehead</text>
<text x="998.3" y="184.6" font-family="DejaVu Sans, Liberation Sans, sans-serif" font-size="9.4" fill="#007800" letter-spacing="0.12">Barnstaple</text>
<text x="937.2" y="217.2" font-family="DejaVu Sans, Liberation Sans, sans-serif" font-size="9.2" font-style="italic" fill="#007800">Bude</text>
<text x="1064.3" y="232.6" font-family="DejaVu Sans, Liberation Sans, sans-serif" font-size="12.3" fill="#000">Exeter</text>
<text x="1121.5" y="228.1" font-family="DejaVu Sans, Liberation Sans, sans-serif" font-size="9.2" font-style="italic" fill="#007800">Colyton</text>
<text x="1160" y="228.8" font-family="DejaVu Sans, Liberation Sans, sans-serif" font-size="9.4" fill="#007800" letter-spacing="0.12">Bridport</text>
<text x="1201.5" y="242.6" font-family="DejaVu Sans, Liberation Sans, sans-serif" font-size="9.4" fill="#007800" letter-spacing="0.12">Weymouth</text>
<text x="1072.9" y="247.5" font-family="DejaVu Sans, Liberation Sans, sans-serif" font-size="9.4" fill="#007800" letter-spacing="0.12">Dawlish</text>
<text x="1270.2" y="232.20000000000002" font-family="DejaVu Sans, Liberation Sans, sans-serif" font-size="12.3" fill="#000">Bournemouth</text>
<text x="1331" y="209.1" font-family="DejaVu Sans, Liberation Sans, sans-serif" font-size="12.3" fill="#000">Southampton</text>
<text x="1361" y="228.6" font-family="DejaVu Sans, Liberation Sans, sans-serif" font-size="9.4" fill="#007800" letter-spacing="0.12">Ryde</text>
<text x="1356.2" y="245.1" font-family="DejaVu Sans, Liberation Sans, sans-serif" font-size="9.2" font-style="italic" fill="#007800">Ventnor</text>
<text x="1421.5" y="221.5" font-family="DejaVu Sans, Liberation Sans, sans-serif" font-size="9.4" fill="#007800" letter-spacing="0.12">Bognor Regis</text>
<text x="1488.5" y="219.1" font-family="DejaVu Sans, Liberation Sans, sans-serif" font-size="12.3" fill="#000">Brighton</text>
<text x="1577.8" y="212.7" font-family="DejaVu Sans, Liberation Sans, sans-serif" font-size="9.4" fill="#007800" letter-spacing="0.12">Hastings</text>
<text x="1598.6" y="201.1" font-family="DejaVu Sans, Liberation Sans, sans-serif" font-size="9.2" font-style="italic" fill="#007800">Rye</text>
<text x="1619.9" y="201.1" font-family="DejaVu Sans, Liberation Sans, sans-serif" font-size="9.2" font-style="italic" fill="#007800">Lydd</text>
<text x="1654.5" y="184.6" font-family="DejaVu Sans, Liberation Sans, sans-serif" font-size="9.4" fill="#007800" letter-spacing="0.12">Folkestone</text>
<text x="1673.4" y="160.9" font-family="DejaVu Sans, Liberation Sans, sans-serif" font-size="9.2" font-style="italic" fill="#007800">Sandwich</text>
<text x="1706.1" y="51.4" font-family="DejaVu Sans, Liberation Sans, sans-serif" font-size="9.2" font-style="italic" fill="#007800">Aldeburgh</text>
<text x="1650.9" y="65.2" font-family="DejaVu Sans, Liberation Sans, sans-serif" font-size="12.3" fill="#000">Ipswich</text>
<text x="1650.6" y="95.5" font-family="DejaVu Sans, Liberation Sans, sans-serif" font-size="9.4" fill="#007800" letter-spacing="0.12">Clacton-on-Sea</text>
<text x="1590.5" y="103.8" font-family="DejaVu Sans, Liberation Sans, sans-serif" font-size="9.4" fill="#007800" letter-spacing="0.12">Maldon</text>
<text x="1608.6" y="116.1" font-family="DejaVu Sans, Liberation Sans, sans-serif" font-size="9.2" font-style="italic" fill="#007800">Burnham on Crouch</text>
<text x="1595.6" y="130.0" font-family="DejaVu Sans, Liberation Sans, sans-serif" font-size="12.3" fill="#000">Southend-on-Sea</text>
<text x="1539.3" y="138.9" font-family="DejaVu Sans, Liberation Sans, sans-serif" font-size="9.2" font-style="italic" fill="#007800">Stone</text>
<text x="1574.6" y="147.4" font-family="DejaVu Sans, Liberation Sans, sans-serif" font-size="12.3" fill="#000">Gillingham</text>
<text x="1679.4" y="146.7" font-family="DejaVu Sans, Liberation Sans, sans-serif" font-size="9.4" fill="#007800" letter-spacing="0.12">Margate</text>
<text x="1490.2" y="132.8" font-family="DejaVu Sans, Liberation Sans, sans-serif" font-size="11.4" font-weight="bold" fill="#0000e0">London</text>
<text x="1870.4" y="166.8" font-family="DejaVu Sans, Liberation Sans, sans-serif" font-size="9.4" fill="#007800" letter-spacing="0.12">Oostende</text>
<text x="1904.4" y="154.1" font-family="DejaVu Sans, Liberation Sans, sans-serif" font-size="9.2" font-style="italic" fill="#007800">Zeebrugge</text>
<text x="1802.3" y="188.1" font-family="DejaVu Sans, Liberation Sans, sans-serif" font-size="9.4" fill="#007800" letter-spacing="0.12">Dunkerque</text>
<text x="1738.6" y="199.4" font-family="DejaVu Sans, Liberation Sans, sans-serif" font-size="9.4" fill="#007800" letter-spacing="0.12">Calais</text>
<text x="1707.4" y="219.0" font-family="DejaVu Sans, Liberation Sans, sans-serif" font-size="9.2" font-style="italic" fill="#007800">Ambleteuse</text>
<text x="1708.2" y="230.6" font-family="DejaVu Sans, Liberation Sans, sans-serif" font-size="9.4" fill="#007800" letter-spacing="0.12">Boulogne-sur-Mer</text>
<text x="1710.8" y="254.7" font-family="DejaVu Sans, Liberation Sans, sans-serif" font-size="9.4" fill="#007800" letter-spacing="0.12">Étaples</text>
<text x="1702.6" y="268.9" font-family="DejaVu Sans, Liberation Sans, sans-serif" font-size="9.4" fill="#007800" letter-spacing="0.12">Berck-Plage</text>
<text x="1693.2" y="297.8" font-family="DejaVu Sans, Liberation Sans, sans-serif" font-size="9.2" font-style="italic" fill="#007800">Cayeux-sur-Mer</text>
<text x="1684.1" y="314.8" font-family="DejaVu Sans, Liberation Sans, sans-serif" font-size="9.2" font-style="italic" fill="#007800">Eu</text>
<text x="1641.3" y="328.4" font-family="DejaVu Sans, Liberation Sans, sans-serif" font-size="9.4" fill="#007800" letter-spacing="0.12">Dieppe</text>
<text x="1594.6" y="342.3" font-family="DejaVu Sans, Liberation Sans, sans-serif" font-size="9.2" font-style="italic" fill="#007800">Néville</text>
<text x="1553.5" y="350.5" font-family="DejaVu Sans, Liberation Sans, sans-serif" font-size="9.4" fill="#007800" letter-spacing="0.12">Fécamp</text>
<text x="1526" y="365.3" font-family="DejaVu Sans, Liberation Sans, sans-serif" font-size="9.2" font-style="italic" fill="#007800">Saint-Jouin-Bruneval</text>
<text x="1519.5" y="385.5" font-family="DejaVu Sans, Liberation Sans, sans-serif" font-size="12.3" fill="#000">Le Havre</text>
<text x="1473.5" y="410.6" font-family="DejaVu Sans, Liberation Sans, sans-serif" font-size="9.2" font-style="italic" fill="#007800">Ouistreham</text>
<text x="1282.6" y="759" font-family="DejaVu Sans, Liberation Sans, sans-serif" font-size="9.4" fill="#007800" letter-spacing="0.12">Les Sables-d&#39;Olonne</text>
<text x="1326.5" y="778.2" font-family="DejaVu Sans, Liberation Sans, sans-serif" font-size="9.2" font-style="italic" fill="#007800">La Tranche-sur-Mer</text>
<text x="1362.4" y="799.7" font-family="DejaVu Sans, Liberation Sans, sans-serif" font-size="9.4" fill="#007800" letter-spacing="0.12">La Rochelle</text>
<text x="1371" y="812.4" font-family="DejaVu Sans, Liberation Sans, sans-serif" font-size="9.2" font-style="italic" fill="#007800">Châtelaillon-Plage</text>
<text x="1383.4" y="829.5" font-family="DejaVu Sans, Liberation Sans, sans-serif" font-size="9.4" fill="#007800" letter-spacing="0.12">Rochefort</text>
<text x="1367.3" y="843.0" font-family="DejaVu Sans, Liberation Sans, sans-serif" font-size="9.2" font-style="italic" fill="#007800">Marennes</text>
<text x="1377.7" y="867.4" font-family="DejaVu Sans, Liberation Sans, sans-serif" font-size="9.4" fill="#007800" letter-spacing="0.12">Royan</text>
<text x="1365.2" y="882.2" font-family="DejaVu Sans, Liberation Sans, sans-serif" font-size="9.2" font-style="italic" fill="#007800">Soulac-sur-Mer</text>
<text x="1800.3" y="464.8" font-family="DejaVu Sans, Liberation Sans, sans-serif" font-size="11.4" font-weight="bold" fill="#0000e0">Paris</text>
<text x="1436.7" y="406.1" font-family="DejaVu Sans, Liberation Sans, sans-serif" font-size="9.2" font-style="italic" fill="#007800" text-anchor="end">Isigny-sur-Mer</text>
<text x="1398.4" y="364.7" font-family="DejaVu Sans, Liberation Sans, sans-serif" font-size="9.4" fill="#007800" letter-spacing="0.12" text-anchor="end">Réville</text>
<text x="1390" y="436.5" font-family="DejaVu Sans, Liberation Sans, sans-serif" font-size="9.2" font-style="italic" fill="#007800" text-anchor="end">Saint-Aubin-sur-Mer</text>
<rect x="737.7" y="242.5" width="628" height="460.5" fill="rgba(140,170,140,0.25)" stroke="#00008b" stroke-width="2"/>
</svg>

<!-- nav controls -->
<svg class="abs" style="left:115px;top:48px" width="70" height="70" viewBox="0 0 70 70">
  <defs><linearGradient id="cg" x1="0" y1="0" x2="0" y2="1"><stop offset="0" stop-color="#4a92d4"/><stop offset="0.5" stop-color="#1d62b0"/><stop offset="0.52" stop-color="#1a4c8c"/><stop offset="1" stop-color="#173f78"/></linearGradient>
  <linearGradient id="cg2" x1="0" y1="0" x2="0" y2="1"><stop offset="0" stop-color="#2a6cb8"/><stop offset="0.5" stop-color="#1a58a4"/><stop offset="0.52" stop-color="#173c70"/><stop offset="1" stop-color="#1a4680"/></linearGradient></defs>
  <circle cx="35" cy="35" r="30.500" fill="url(#cg)" stroke="#163a6c" stroke-width="1"/>
  <path d="M13.500 13.500L22 22M56.500 13.500L48 22M13.500 56.500L22 48M56.500 56.500L48 48" stroke="#143460" stroke-width="1"/>
  <circle cx="35" cy="35" r="18" fill="url(#cg2)" stroke="#143460" stroke-width="1"/>
  <path d="M35 9l-5 5h10zM35 61l-5-5h10zM9 35l5-5v10zM61 35l-5-5v10z" fill="#fff"/>
  <text x="35" y="39.700" text-anchor="middle" font-family="Liberation Sans, sans-serif" font-weight="bold" font-size="13" fill="#f4f4f4">1:1</text>
</svg>
<svg class="abs" style="left:139px;top:130px" width="23" height="174" viewBox="0 0 23 174">
  <defs><linearGradient id="tg" x1="0" y1="0" x2="1" y2="0"><stop offset="0" stop-color="#2f74aa"/><stop offset="0.5" stop-color="#5a9ed2"/><stop offset="1" stop-color="#2f74aa"/></linearGradient>
  <linearGradient id="hg" x1="0" y1="0" x2="0" y2="1"><stop offset="0" stop-color="#4a92d4"/><stop offset="0.5" stop-color="#1d62b0"/><stop offset="0.52" stop-color="#173f78"/><stop offset="1" stop-color="#1a4c8c"/></linearGradient></defs>
  <rect x="1.500" y="1.500" width="20" height="20" rx="3.500" fill="url(#hg)" stroke="#5a6f8c"/>
  <path d="M4.500 11.500h14M11.500 5v13" stroke="#fff" stroke-width="2.600"/>
  <rect x="8.500" y="31" width="6" height="108" rx="3" fill="url(#tg)"/>
  <circle cx="11.500" cy="92" r="9.500" fill="url(#hg)" stroke="#163a6c" stroke-width="0.8"/>
  <rect x="1.500" y="151.500" width="20" height="20" rx="3.500" fill="url(#hg)" stroke="#5a6f8c"/>
  <path d="M4.500 161.500h14" stroke="#fff" stroke-width="2.600"/>
</svg>

<style>
#dlg{position:absolute;left:537px;top:245px;width:846px;height:505px;background:#f0f0f0;border:1px solid #1883d7;box-shadow:0 5px 15px 1px rgba(0,0,0,.30),0 0 5px rgba(0,0,0,.10);font-family:"Liberation Sans",sans-serif}
#dlg .a{position:absolute;white-space:nowrap}
#dlg .b{font-weight:bold;font-size:13px;line-height:15px}
#dlg .t{font-size:12px;line-height:14px}
#dlg .gb{position:absolute;border:1px solid #dcdcdc}
#dlg .gl{position:absolute;background:#f0f0f0;font-weight:bold;font-size:13px;line-height:15px;padding:0 2px;white-space:nowrap}
#dlg .spin{position:absolute;width:74px;height:20px;background:#fff;border:1px solid #a6a6a6;font-size:12.2px;line-height:18px}
#dlg .spin span{position:absolute;right:23px;top:1px}
#dlg .spin i{position:absolute;right:1px;top:1px;width:15px;height:16px;background:linear-gradient(#f0f0f0 0,#f0f0f0 7px,#c4c4c4 7px,#c4c4c4 9px,#f0f0f0 9px);border:1px solid #c4c4c4}
#dlg .btn{position:absolute;background:#e1e1e1;border:1px solid #adadad;text-align:center;font-size:12px;white-space:nowrap}
#dlg .lb{position:absolute;background:#fff;border:1px solid #828790}
#dlg .rad{position:absolute;width:13px;height:13px;border-radius:50%;background:#fff;border:1px solid #333}
#dlg .rad.on::after{content:"";position:absolute;left:2.500px;top:2.500px;width:6px;height:6px;border-radius:50%;background:#222}
#dlg .rl{position:absolute;font-size:12.5px;line-height:15px;white-space:nowrap}
.red{position:absolute;border:5px solid #ed1c24}
</style>
<div id="dlg">
  <!-- title bar (coords relative to dialog inner origin 538,246) -->
  <div class="a" style="left:0;top:0;width:844px;height:30px;background:#fff"></div>
  <svg class="a" style="left:8px;top:6px" width="16" height="16" viewBox="0 0 16 16"><defs><linearGradient id="ig" x1="0" y1="0" x2="0" y2="1"><stop offset="0" stop-color="#2b8fd0"/><stop offset="0.5" stop-color="#1a5fa0"/><stop offset="0.52" stop-color="#123c70"/><stop offset="1" stop-color="#174a84"/></linearGradient></defs><rect x="0.500" y="0.500" width="15" height="15" rx="3" fill="url(#ig)"/><path d="M3 14L8.500 3.500l5 1.500M7 6.500l5.500 2" stroke="#fff" stroke-width="1.300" fill="none"/></svg>
  <div class="a" id="ttl" style="left:29px;top:8px;font-size:12.3px;line-height:15px;letter-spacing:-0.37px">Requête GRIB Avancée - Téléchargement Direct</div>
  <svg class="a" style="left:720px;top:4px" width="120" height="20" viewBox="0 0 120 20"><path d="M5.500 10.500h10" stroke="#000" stroke-width="1"/><rect x="50.500" y="5.500" width="9" height="9" fill="none" stroke="#000" stroke-width="1"/><path d="M96.500 5.500l10 10M106.500 5.500l-10 10" stroke="#000" stroke-width="1.100"/></svg>
  <!-- menu strip -->
  <div class="a" style="left:0;top:30px;width:844px;height:27px;background:linear-gradient(90deg,#f4f4f4,#fbfbfb 40%,#f3f3f3)"></div>
  <div class="a t mn" style="left:15px;top:37px;letter-spacing:0">GribMail</div>
  <div class="a t mn" style="left:79px;top:37px;letter-spacing:-0.1px">Mode Classique</div>
  <div class="a t mn" style="left:182px;top:37px;letter-spacing:-0.155px">Charger la requête précédente</div>
  <div class="a t mn" style="left:360px;top:37px;letter-spacing:0">Runtimes</div>
  <div class="a" style="left:679px;top:32px;width:163px;height:23px;background:#fff"></div>
  <div class="a t mn" style="left:683px;top:37px;letter-spacing:-0.6px">Free</div>
  <svg class="a" style="left:833px;top:42px" width="6" height="4" viewBox="0 0 6 4"><path d="M0 0h6L3 3.500z" fill="#000"/></svg>

  <!-- Zone group -->
  <div class="gb" style="left:4px;top:67px;width:109px;height:156px"></div>
  <div class="gl" style="left:10px;top:61px">Zone</div>
  <div class="a b" style="left:12px;top:89px">N</div>
  <div class="a b" style="left:13px;top:125px">S</div>
  <div class="a b" style="left:10px;top:161px">W</div>
  <div class="a b" style="left:13px;top:198px">E</div>
  <div class="spin" style="left:33px;top:84px"><span>50.5461</span><i></i></div>
  <div class="spin" style="left:33px;top:120px"><span>46.8640</span><i></i></div>
  <div class="spin" style="left:33px;top:156px"><span>-6.1242</span><i></i></div>
  <div class="spin" style="left:33px;top:194px"><span>-1.1083</span><i></i></div>
  <svg class="a" style="left:91px;top:84px" width="15" height="130" viewBox="0 0 15 130"><path fill="#000" d="M7.500 4.500l3 3.500h-6zM7.500 15.500l3-3.500h-6zM7.500 40.500l3 3.500h-6zM7.500 51.500l3-3.500h-6zM7.500 76.500l3 3.500h-6zM7.500 87.500l3-3.500h-6zM7.500 114.500l3 3.500h-6zM7.500 125.500l3-3.500h-6z"/></svg>

  <!-- Modèles group -->
  <div class="gb" style="left:121px;top:67px;width:354px;height:158px"></div>
  <div class="gl" style="left:127px;top:61px;letter-spacing:0.35px">Modèles</div>
  <div class="a" id="it1" style="left:213px;top:77px;font-size:12px;line-height:14px;font-style:italic;letter-spacing:-0.69px">Sélectionner un modèle par requête</div>
  <div class="lb" style="left:125px;top:93px;width:344px;height:124px"><div class="a" style="right:0;top:0;width:17px;height:122px;background:#f0f0f0"></div>
    <svg class="a" style="right:4px;top:7px" width="9" height="6" viewBox="0 0 9 6"><path d="M1 4.800L4.500 1.500l3.500 3.300" stroke="#bcbcbc" stroke-width="1.700" fill="none"/></svg>
    <svg class="a" style="right:4px;bottom:7px" width="9" height="6" viewBox="0 0 9 6"><path d="M1 1.200L4.500 4.500l3.500-3.300" stroke="#bcbcbc" stroke-width="1.700" fill="none"/></svg></div>

  <!-- Variables group -->
  <div class="gb" style="left:481px;top:67px;width:360px;height:158px"></div>
  <div class="gl" style="left:488px;top:61px;letter-spacing:0.36px">Variables</div>
  <div class="a" id="it2" style="left:495px;top:82px;font-size:12px;line-height:14px;font-style:italic;letter-spacing:-0.66px">Sélectionner différentes variables</div>
  <div class="a" style="left:781px;top:81px;width:13px;height:13px;background:#fff;border:1px solid #333"></div>
  <div class="a b" style="left:801px;top:81px;font-size:12.500px;letter-spacing:-0.5px">Tous</div>
  <div class="lb" style="left:487px;top:103px;width:349px;height:122px;border-bottom:none"><div class="a" style="right:0;top:0;width:17px;height:121px;background:#f0f0f0"></div>
    <svg class="a" style="right:4px;top:7px" width="9" height="6" viewBox="0 0 9 6"><path d="M1 4.800L4.500 1.500l3.500 3.300" stroke="#bcbcbc" stroke-width="1.700" fill="none"/></svg>
    <svg class="a" style="right:4px;bottom:6px" width="9" height="6" viewBox="0 0 9 6"><path d="M1 1.200L4.500 4.500l3.500-3.300" stroke="#bcbcbc" stroke-width="1.700" fill="none"/></svg></div>

  <!-- Pas group -->
  <div class="gb" style="left:4px;top:241px;width:471px;height:258px"></div>
  <div class="gl" style="left:10px;top:234px;letter-spacing:0.4px">Pas</div>
  <div class="a" style="left:9px;top:253px;width:460px;height:38px;border:1px solid #696969"></div>
  <div class="a b" style="left:16px;top:266px;letter-spacing:0.2px">Sélectionner:</div>
  <div class="btn" style="left:112px;top:258px;width:48px;height:28px;line-height:27px">Tous</div>
  <div class="btn" style="left:168px;top:258px;width:48px;height:28px;line-height:27px">1/2</div>
  <div class="btn" style="left:224px;top:258px;width:48px;height:28px;line-height:27px">1/3</div>
  <div class="btn" style="left:280px;top:258px;width:48px;height:28px;line-height:27px">1/6</div>
  <div class="btn" style="left:336px;top:258px;width:49px;height:28px;line-height:27px">1/12</div>
  <div class="btn" style="left:393px;top:258px;width:56px;height:28px;line-height:27px">Aucun</div>
  <div class="a" style="left:9px;top:297px;width:460px;height:31px;border:1px solid #696969"></div>
  <div class="a b" style="left:16px;top:307px;letter-spacing:0.19px">Du pas:</div>
  <div class="a" style="left:75px;top:301px;width:46px;height:23px;background:#e1e1e1;border:1px solid #adadad"></div>
  <svg class="a" style="left:107px;top:310px" width="10" height="6" viewBox="0 0 10 6"><path d="M1 0.500L5 4.500l4-4" stroke="#444" stroke-width="1" fill="none"/></svg>
  <div class="a b" style="left:130px;top:307px;letter-spacing:0.45px">par</div>
  <div class="a" style="left:161px;top:301px;width:40px;height:21px;background:#fff;border:1px solid #adadad"></div>
  <div class="a b" style="left:170px;top:304px;font-size:13px">1</div>
  <div class="a" style="left:185px;top:303px;width:14px;height:17px;background:linear-gradient(#f0f0f0 0,#f0f0f0 7px,#c4c4c4 7px,#c4c4c4 9px,#f0f0f0 9px);border:1px solid #c4c4c4"></div>
  <svg class="a" style="left:185px;top:302px" width="15" height="20" viewBox="0 0 15 20"><path d="M7.500 4.500l3 3.500h-6zM7.500 15.500l3-3.500h-6z" fill="#000"/></svg>
  <div class="a b" style="left:210px;top:307px;letter-spacing:0.37px">pas</div>
  <div class="btn" style="left:244px;top:302px;width:96px;height:23px;line-height:22px;font-weight:bold;font-size:13px;letter-spacing:0.2px;text-indent:-1px">Sélectionner</div>
  <div class="lb" style="left:9px;top:334px;width:460px;height:157px"><div class="a" style="left:0;bottom:0;width:458px;height:17px;background:#f0f0f0"></div>
    <svg class="a" style="left:6px;bottom:4px" width="6" height="9" viewBox="0 0 6 9"><path d="M4.800 1L1.500 4.500l3.300 3.500" stroke="#b4b4b4" stroke-width="1.700" fill="none"/></svg>
    <svg class="a" style="right:6px;bottom:4px" width="6" height="9" viewBox="0 0 6 9"><path d="M1.200 1L4.500 4.500l-3.300 3.500" stroke="#b4b4b4" stroke-width="1.700" fill="none"/></svg></div>

  <!-- Options group -->
  <div class="gb" style="left:481px;top:243px;width:358px;height:242px"></div>
  <div class="gl" style="left:488px;top:237px">Options</div>
  <div class="a b" style="left:490px;top:261px;letter-spacing:0.5px">Format:</div>
  <div class="rad" style="left:598px;top:262px"></div><div class="rl" style="left:618px;top:262px;letter-spacing:-0.3px">GRIB1</div>
  <div class="rad on" style="left:666px;top:262px"></div><div class="rl" style="left:685px;top:262px;letter-spacing:-0.3px">GRIB2</div>
  <div class="a b" style="left:490px;top:292px;letter-spacing:0.63px">Compression:</div>
  <div class="rad on" style="left:598px;top:293px"></div><div class="rl" style="left:618px;top:293px;letter-spacing:0.32px">Gz (plus rapide)</div>
  <div class="rad" style="left:725px;top:293px"></div><div class="rl" style="left:744px;top:293px">Bz2</div>
  <div class="rad" style="left:598px;top:319px"></div><div class="rl" style="left:618px;top:319px;letter-spacing:0.4px">GC High Compression</div>
  <div class="btn" style="left:488px;top:346px;width:344px;height:32px;line-height:31px;font-weight:bold;font-size:13px;letter-spacing:0.28px">Télécharger le GRIB</div>
</div>
<!-- red annotation rectangles -->
<div class="red" style="left:536px;top:300px;width:121px;height:176px"></div>
<div class="red" style="left:536px;top:476px;width:482px;height:264px"></div>


<!-- bottom panel -->
<div id="bottom">
  <div class="abs" style="left:0;top:0;width:1920px;height:1px;background:#fff"></div>
  <div class="abs" style="left:35px;top:19px;width:1880px;height:49px;background:#d4d4d4;border-top:1px solid #8c8c8c;border-bottom:1px solid #8c8c8c"></div>
  <div class="abs" style="left:35px;top:34px;width:1880px;height:2px;background:#868686"></div>
  <div class="abs" style="left:35px;top:50px;width:1880px;height:2px;background:#868686"></div>
  <div class="abs" style="left:19px;top:19px;width:16px;height:15px;background:#d6d6d6;border:1px solid #7e7e7e;box-shadow:inset 1px 1px 0 #f2f2f2,inset -1px -1px 0 #8e8e8e,inset 2px 2px 0 #e4e4e4,inset -2px -2px 0 #b0b0b0"></div>
  <div class="abs" style="left:19px;top:35px;width:16px;height:15px;background:#d6d6d6;border:1px solid #7e7e7e;box-shadow:inset 1px 1px 0 #f2f2f2,inset -1px -1px 0 #8e8e8e,inset 2px 2px 0 #e4e4e4,inset -2px -2px 0 #b0b0b0"></div>
  <div class="abs" style="left:19px;top:51px;width:16px;height:15px;background:#d6d6d6;border:1px solid #7e7e7e;box-shadow:inset 1px 1px 0 #f2f2f2,inset -1px -1px 0 #8e8e8e,inset 2px 2px 0 #e4e4e4,inset -2px -2px 0 #b0b0b0"></div>
  <div class="abs gsr" style="left:5px;top:21px">G</div>
  <div class="abs gsr" style="left:5px;top:37px">S</div>
  <div class="abs gsr" style="left:5px;top:53px">R</div>
  <div class="abs gsr" style="left:41px;top:84px;white-space:pre;font-size:13.3px">--- -- - --:--</div>
  <div class="abs" style="left:161px;top:79px;width:219px;height:22px;background:#cbcbcb;border:1px solid #d8d8d8"></div>
  <svg class="abs" style="left:364px;top:86px" width="12" height="8" viewBox="0 0 12 8"><path d="M1.500 1.500L6 6l4.500-4.500" stroke="#a8a8a8" stroke-width="1.200" fill="none"/></svg>

  <div class="pb" style="left:1286px"><svg width="26" height="23" viewBox="0 0 26 23"><path d="M5 6v11M6 11.500L13 6v11zM13 11.500L20 6v11z" fill="#f2f2f2" stroke="#f2f2f2" stroke-width="1.600"/></svg></div>
  <div class="pb" style="left:1321px"><svg width="26" height="23" viewBox="0 0 26 23"><path d="M8 6v11M9.500 11.500L17 6v11z" fill="#f2f2f2" stroke="#f2f2f2" stroke-width="1.600"/></svg></div>
  <div class="pb" style="left:1357px"><svg width="26" height="23" viewBox="0 0 26 23"><path d="M9 6l9 5.500-9 5.500z" fill="#f2f2f2"/></svg></div>
  <div class="pb" style="left:1393px"><svg width="26" height="23" viewBox="0 0 26 23"><path d="M18 6v11M16.500 11.500L9 6v11z" fill="#f2f2f2" stroke="#f2f2f2" stroke-width="1.600"/></svg></div>
  <div class="pb" style="left:1429px"><svg width="26" height="23" viewBox="0 0 26 23"><path d="M21 6v11M20 11.500L13 6v11zM13 11.500L6 6v11z" fill="#f2f2f2" stroke="#f2f2f2" stroke-width="1.600"/></svg></div>
  <div class="pb" style="left:1465px"><svg width="26" height="23" viewBox="0 0 26 23"><circle cx="13" cy="12" r="8.500" fill="none" stroke="#ececec" stroke-width="1.600"/><path d="M13 7v5.500l4-2.500M6 5l3-2M20 5l-3-2" stroke="#ececec" stroke-width="1.300" fill="none"/></svg></div>
  <div class="abs bt" style="left:1503px;top:82px">par</div>
  <div class="abs bt" style="left:1538px;top:81px">1</div>
  <div class="abs" style="left:1549px;top:81px;width:15px;height:18px;background:#f0f0f0;border:1px solid #fff"></div>
  <svg class="abs" style="left:1549px;top:81px" width="15" height="18" viewBox="0 0 15 18"><path d="M7.500 3.500l3 3.500h-6zM7.500 14.500l3-3.500h-6z" fill="#222"/><path d="M1 9h13" stroke="#c8c8c8" stroke-width="1"/></svg>
  <div class="abs bt" style="left:1586px;top:82px;letter-spacing:-0.4px">VITESSE</div>
  <div class="abs" style="left:1658px;top:87px;width:81px;height:3px;background:#f4f4f4"></div>
  <svg class="abs" style="left:1704px;top:79px" width="12" height="21" viewBox="0 0 12 21"><path d="M1 1h10v14l-5 5-5-5z" fill="#c4c4c4" stroke="#9a9a9a" stroke-width="0.800"/></svg>
  <div class="abs bt" style="left:1760px;top:82px;letter-spacing:-0.7px">ZOOM</div>
  <div class="pb" style="left:1810px;width:27px"><svg width="27" height="23" viewBox="0 0 27 23"><path d="M6 11.500h15M13.500 4v15" stroke="#f2f2f2" stroke-width="3"/></svg></div>
  <div class="pb" style="left:1846px;width:27px"><svg width="27" height="23" viewBox="0 0 27 23"><text x="13.500" y="17" text-anchor="middle" font-family="Liberation Sans, sans-serif" font-weight="bold" font-size="14" fill="#f2f2f2">1:1</text></svg></div>
  <div class="pb" style="left:1882px;width:27px"><svg width="27" height="23" viewBox="0 0 27 23"><path d="M6 11.500h15" stroke="#f2f2f2" stroke-width="3"/></svg></div>
</div>
<div id="black-r"></div><div id="black-b"></div>
<style>
.gsr{font-family:"Liberation Mono",monospace;font-size:13px;line-height:14px;color:#f0e000}
.pb{position:absolute;top:77px;width:26px;height:25px;border-radius:4px 4px 2px 2px;background:linear-gradient(#a0a0a0 0%,#8a8a8a 12%,#5a5a5a 46%,#3c3c3c 50%,#414141 100%);box-shadow:0 0 0 1px rgba(70,72,78,.5)}
.bt{color:#e6e6e6;font-size:13.5px;line-height:16px;white-space:nowrap}
</style>

</body></html>
